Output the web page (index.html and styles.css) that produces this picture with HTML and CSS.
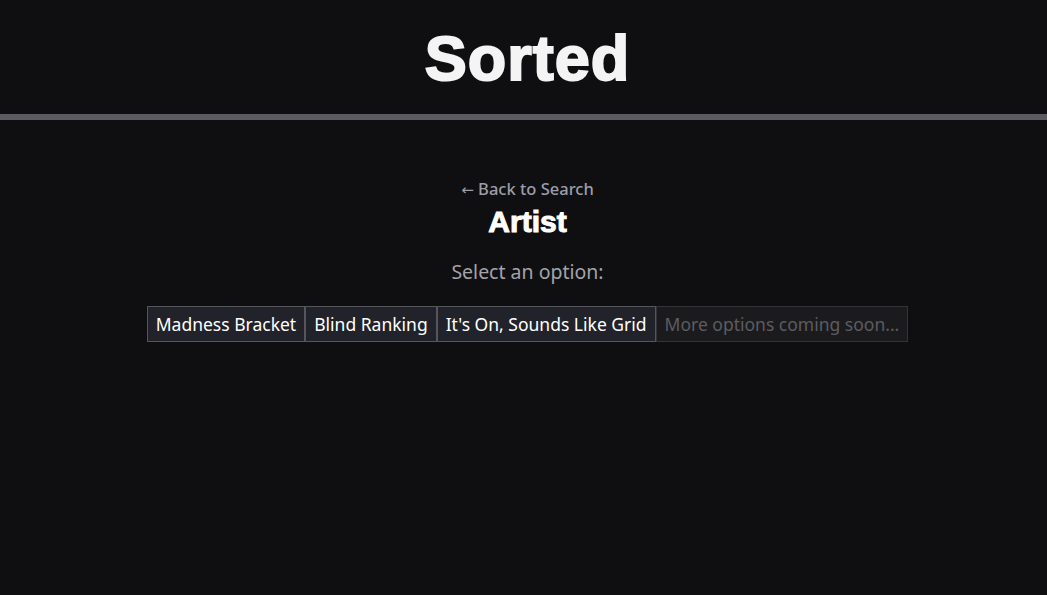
FILE: index.html
```html
<!DOCTYPE html>
<html lang="en">
<head>
    <meta charset="UTF-8">
    <meta name="viewport" content="width=device-width, initial-scale=1.0">
    <title>Sorted</title>
    <link rel="stylesheet" href="styles.css">
</head>
<body>
    <header class="header">
        <h1 class="logo">Sorted</h1>
    </header>

    <!-- Game picker for the chosen artist -->
    <main class="picker">
        <a href="#" class="back-link"><span class="arrow">&larr;</span> Back to Search</a>
        <h2 class="artist-name">Artist</h2>
        <p class="prompt">Select an option:</p>
        <div class="options">
            <button class="option">Madness Bracket</button>
            <button class="option">Blind Ranking</button>
            <button class="option">It's On, Sounds Like Grid</button>
            <button class="option option-disabled" disabled>More options coming soon...</button>
        </div>
    </main>
</body>
</html>
```

FILE: styles.css
```css
* {
    box-sizing: border-box;
}

body {
    margin: 0;
    font-family: "Noto Sans", "Open Sans", sans-serif;
    background-color: #0f0f11;
    color: #f2f2f2;
    height: 100vh;
    overflow: hidden;
}

.header {
    border-bottom: 6px solid #5c5b63;
    text-align: center;
    padding: 22px 0 20px 8px;
}

.logo {
    margin: 0;
    font-family: "Liberation Sans", Arial, sans-serif;
    font-weight: 900;
    font-size: 63px;
    line-height: 72px;
    letter-spacing: 1px;
    color: #f4f4f4;
    -webkit-text-stroke: 2px #f4f4f4;
}

.picker {
    display: flex;
    flex-direction: column;
    align-items: center;
    padding: 58px 0 0 8px;
}

.back-link {
    color: #9d9da8;
    text-decoration: none;
    font-size: 16.5px;
    font-weight: 500;
    line-height: 22px;
}

.arrow {
    font-family: "DejaVu Sans", sans-serif;
    font-size: 15px;
}

.artist-name {
    margin: 3px 0 0 0;
    font-family: "Liberation Sans", Arial, sans-serif;
    font-weight: 900;
    font-size: 30px;
    line-height: 36px;
    color: #ffffff;
    -webkit-text-stroke: 1px #ffffff;
}

.prompt {
    margin: 20px 0 22px 0;
    font-size: 19.5px;
    line-height: 24px;
    color: #a3a3ab;
}

.options {
    display: flex;
}

.option {
    font-family: inherit;
    font-size: 17.5px;
    line-height: 24px;
    padding: 5px 8px;
    background-color: #22232a;
    color: #ffffff;
    border: 1px solid #55565c;
    cursor: pointer;
}

.option-disabled {
    background-color: #1b1b1e;
    color: #5c5c62;
    border-color: #333338;
    cursor: default;
}
```
